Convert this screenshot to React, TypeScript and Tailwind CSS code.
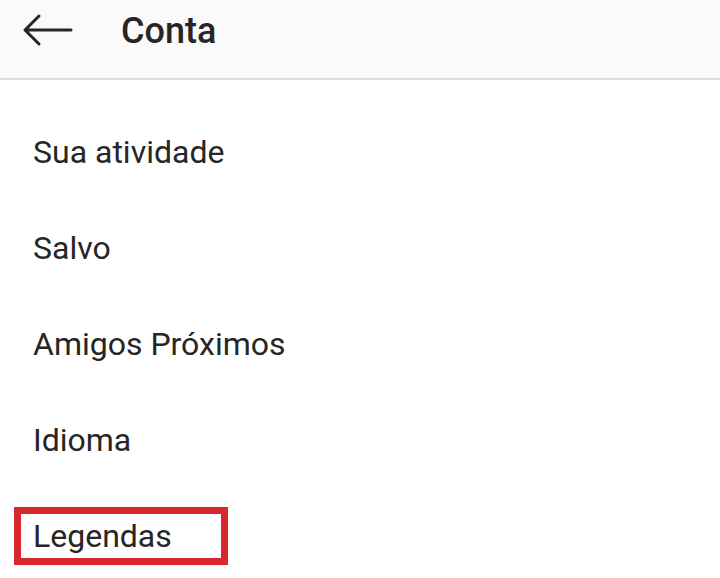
import React from 'react';

const items = ['Sua atividade', 'Salvo', 'Amigos Próximos', 'Idioma'];

export default function App() {
  return (
    <div className="w-[720px] h-[578px] bg-white overflow-hidden text-[#262626]" style={{ fontFamily: 'Roboto, sans-serif' }}>
      <div className="h-[80px] pb-[16px] bg-[#fafafa] border-b-2 border-[#dedede] flex items-center">
        <svg className="ml-[22px] w-[52px] h-[36px]" viewBox="0 0 52 36" fill="none" stroke="#262626" strokeWidth={3} strokeLinecap="round" strokeLinejoin="round">
          <path d="M49 17H4M17 3L3 17l14 14" />
        </svg>
        <h1 className="ml-[47px] text-[36px] font-medium leading-none">Conta</h1>
      </div>
      <div className="pt-[24px]">
        {items.map((t) => (
          <div key={t} className="h-[96px] flex items-center pl-[33px] text-[32px]">
            {t}
          </div>
        ))}
        <div className="h-[96px] flex items-center pl-[14px]">
          <div className="w-[214px] h-[58px] border-[7px] border-[#d9272e] flex items-center pl-[12px] text-[32px]">
            Legendas
          </div>
        </div>
      </div>
    </div>
  );
}
